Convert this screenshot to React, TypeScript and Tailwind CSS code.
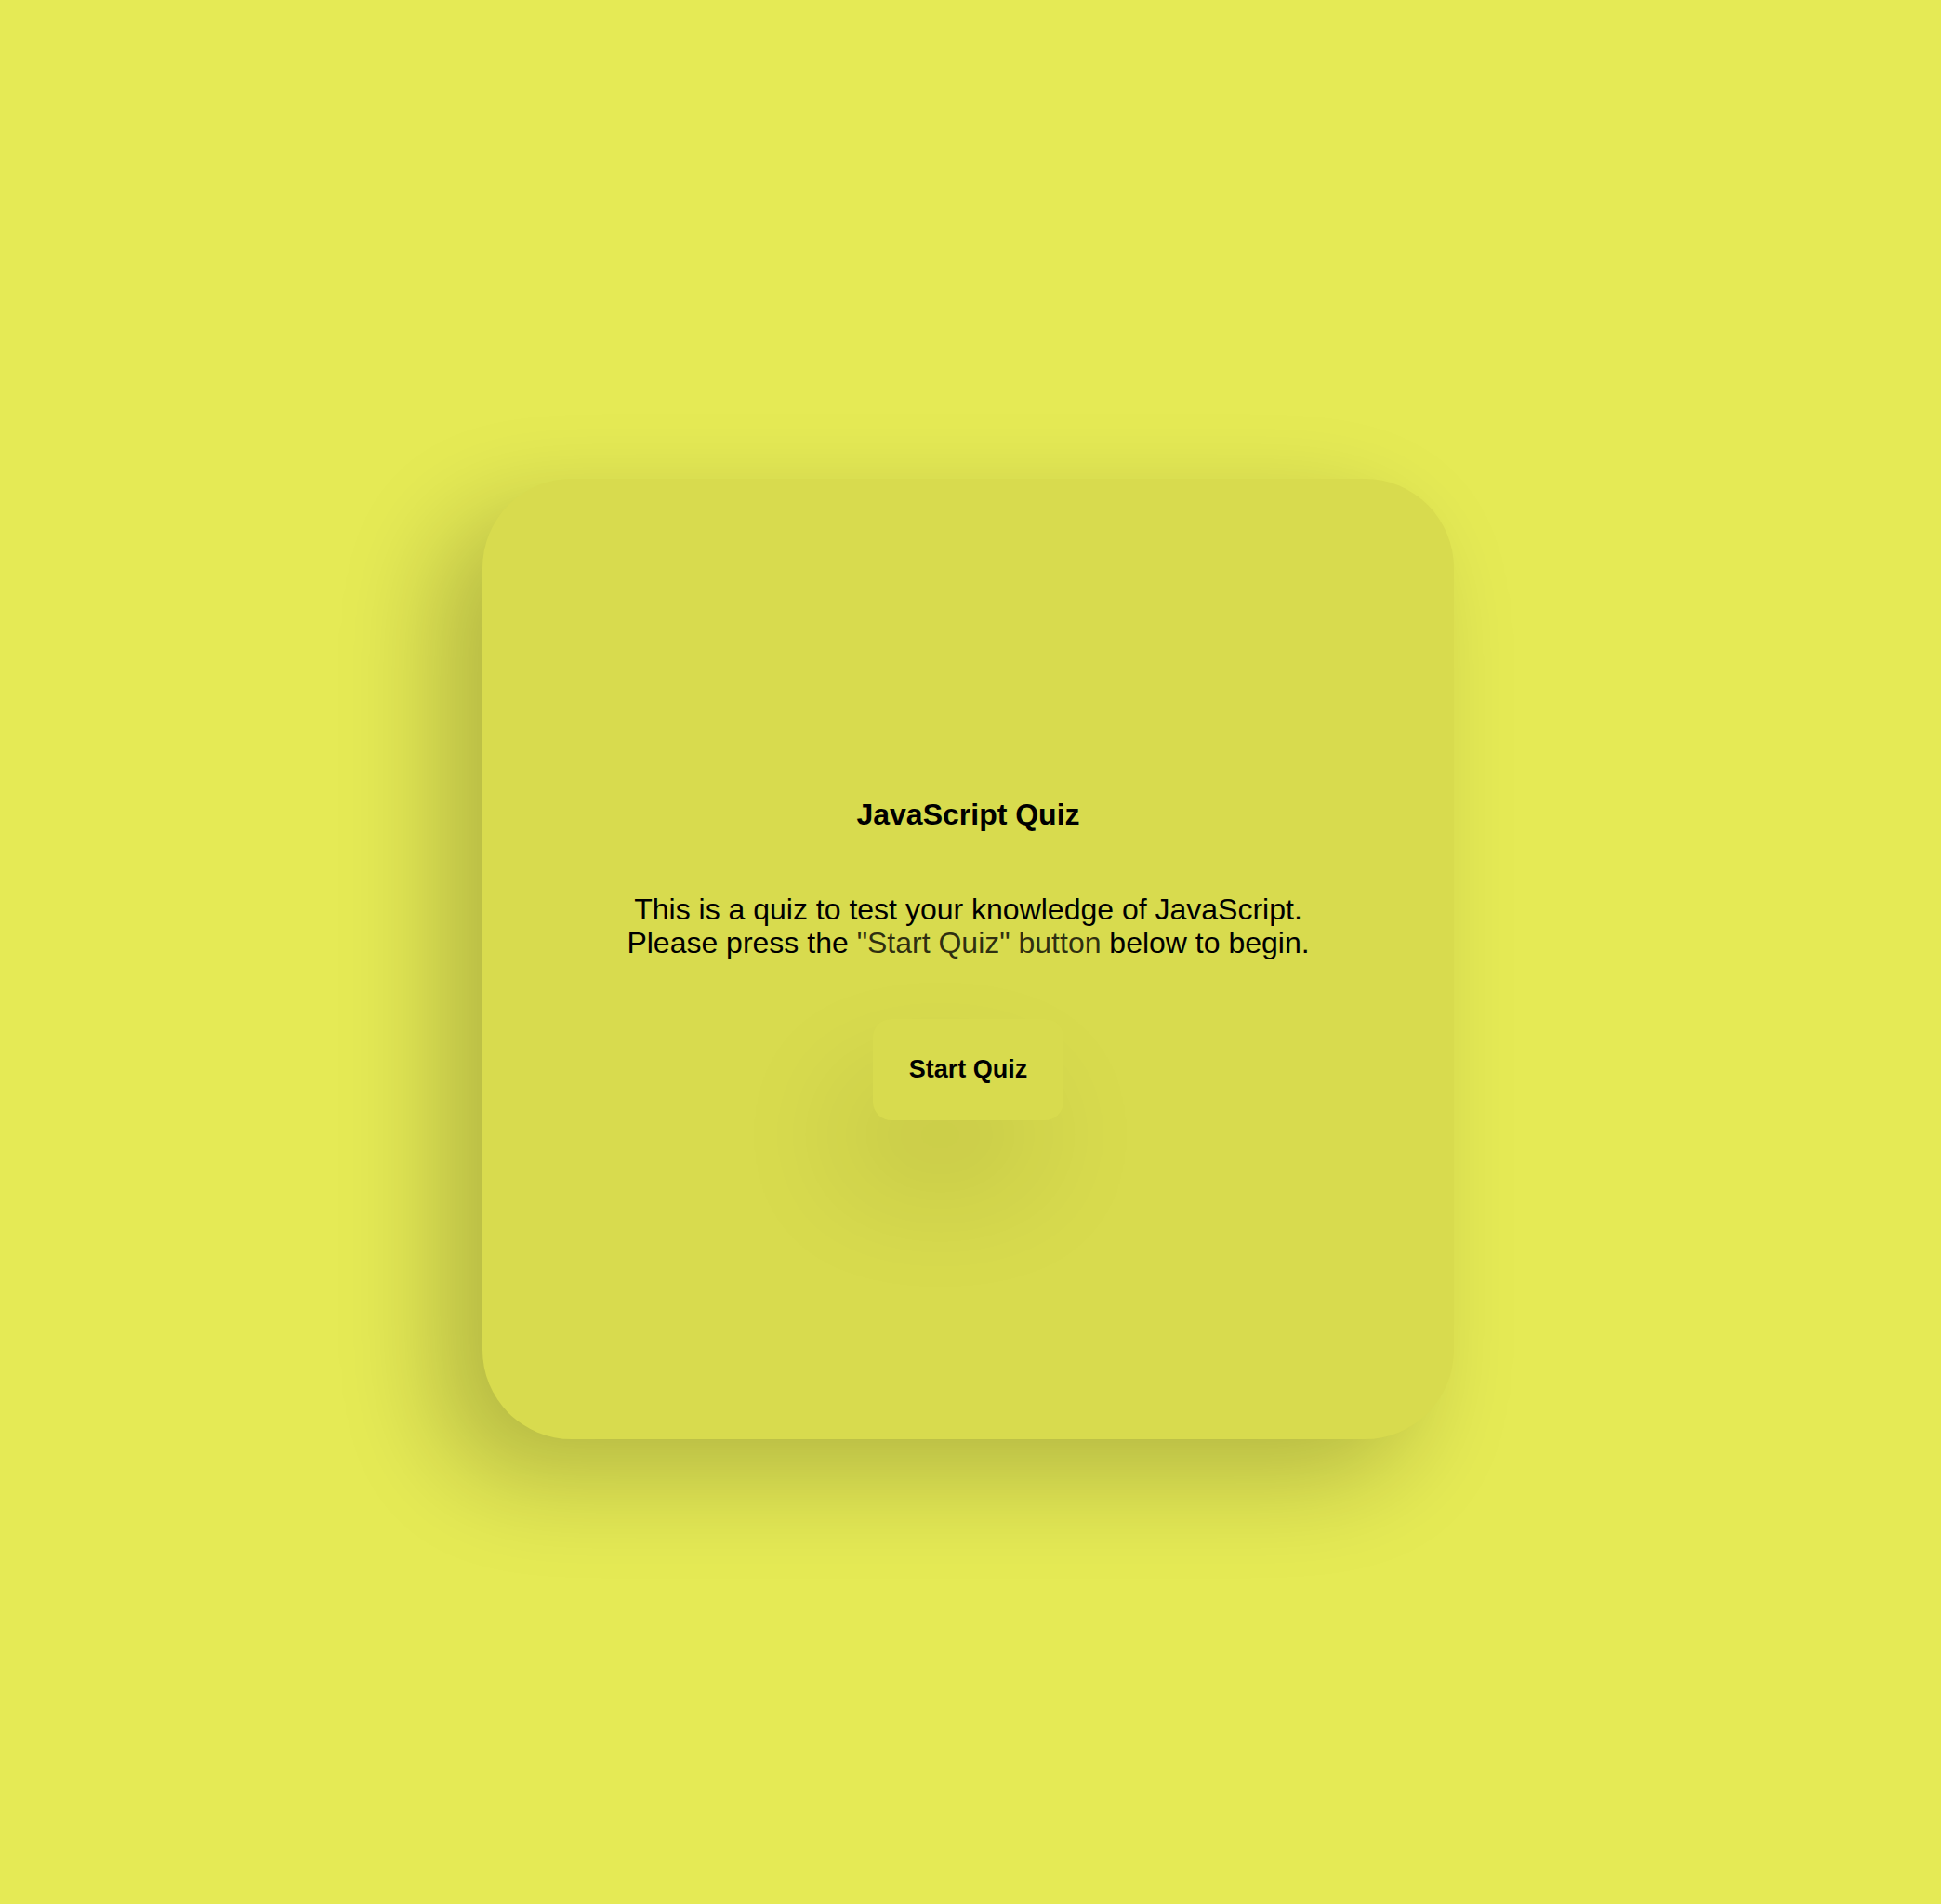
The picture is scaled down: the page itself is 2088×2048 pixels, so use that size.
import React from "react";

export default function App() {
  return (
    <div
      className="w-full h-[2048px] bg-[#e5ea55] flex items-center justify-center pt-[15px] pr-[5px]"
      style={{ fontFamily: '"Liberation Sans", Arial, Helvetica, sans-serif' }}
    >
      <div className="w-[1045px] h-[1033px] rounded-[96px] bg-[#d8db4e] shadow-[-45px_40px_110px_rgba(0,0,0,0.22)] flex flex-col items-center justify-center text-black">
        <h1 className="text-[32px] leading-[36px] font-bold">JavaScript Quiz</h1>
        <p className="mt-[66px] text-[32px] leading-[36px] text-center">
          This is a quiz to test your knowledge of JavaScript.
          <br />
          Please press the <span className="text-black/80">"Start Quiz" button</span> below to begin.
        </p>
        <button className="mt-[64px] px-[39px] py-[39px] rounded-[20px] bg-[#d8db4e] text-[27px] leading-[31px] font-bold text-black shadow-[-30px_70px_130px_rgba(0,0,0,0.1)]">
          Start Quiz
        </button>
      </div>
    </div>
  );
}
